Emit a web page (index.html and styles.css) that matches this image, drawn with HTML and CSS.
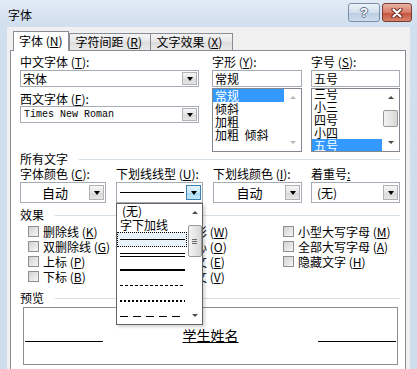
FILE: index.html
```html
<!DOCTYPE html>
<html lang="zh-CN">
<head>
    <meta charset="UTF-8">
    <title>字体</title>
    <link rel="stylesheet" href="styles.css">
</head>
<body>
    <div class="window">
        <div class="titlebar">
            <span class="title">字体</span>
            <div class="caption-btns">
                <span class="cap-btn help">?</span>
                <span class="cap-btn close">
                    <svg width="14" height="10" viewBox="0 0 14 10">
                        <path d="M3.5 1.5 L10.5 8.5 M10.5 1.5 L3.5 8.5" stroke="#6b2a22" stroke-width="4.2" stroke-linecap="round"/>
                        <path d="M3.5 1.5 L10.5 8.5 M10.5 1.5 L3.5 8.5" stroke="#fff" stroke-width="2.2" stroke-linecap="round"/>
                    </svg>
                </span>
            </div>
        </div>

        <div class="client">
            <div class="tabs">
                <span class="tab active">字体 (<u>N</u>)</span>
                <span class="tab">字符间距 (<u>R</u>)</span>
                <span class="tab">文字效果 (<u>X</u>)</span>
            </div>

            <div class="panel">
                <div class="font-row">
                    <div class="col">
                        <div class="lbl">中文字体 (<u>T</u>):</div>
                        <div class="field select-wide">
                            <span class="val">宋体</span>
                            <span class="drop-btn"><i class="tri-down"></i></span>
                        </div>
                        <div class="lbl lbl-gap">西文字体 (<u>F</u>):</div>
                        <div class="field select-wide flush">
                            <span class="val mono">Times New Roman</span>
                            <span class="drop-btn"><i class="tri-down"></i></span>
                        </div>
                    </div>
                    <div class="col">
                        <div class="lbl">字形 (<u>Y</u>):</div>
                        <div class="field list-w">常规</div>
                        <div class="listbox list-w">
                            <div class="items">
                                <div class="item sel">常规</div>
                                <div class="item">倾斜</div>
                                <div class="item">加粗</div>
                                <div class="item">加粗&nbsp;&nbsp;倾斜</div>
                            </div>
                            <div class="vscroll">
                                <span class="sbtn"><i class="tri-up off"></i></span>
                                <span class="sbtn"><i class="tri-down off"></i></span>
                            </div>
                        </div>
                    </div>
                    <div class="col">
                        <div class="lbl">字号 (<u>S</u>):</div>
                        <div class="field list-w2">五号</div>
                        <div class="listbox list-w2">
                            <div class="items scrolled">
                                <div class="item">三号</div>
                                <div class="item">小三</div>
                                <div class="item">四号</div>
                                <div class="item">小四</div>
                                <div class="item sel">五号</div>
                            </div>
                            <div class="vscroll">
                                <span class="sbtn"><i class="tri-up"></i></span>
                                <span class="thumb thumb-small"></span>
                                <span class="sbtn"><i class="tri-down"></i></span>
                            </div>
                        </div>
                    </div>
                </div>

                <div class="group">所有文字</div>
                <div class="color-row">
                    <div class="col">
                        <div class="lbl">字体颜色 (<u>C</u>):</div>
                        <div class="combo c1">
                            <span class="combo-val center">自动</span>
                            <span class="drop-btn"><i class="tri-down"></i></span>
                        </div>
                    </div>
                    <div class="col">
                        <div class="lbl">下划线线型 (<u>U</u>):</div>
                        <div class="combo c2">
                            <span class="combo-val"><span class="ln-single"></span></span>
                            <span class="drop-btn hot"><i class="tri-down"></i></span>
                        </div>
                    </div>
                    <div class="col">
                        <div class="lbl">下划线颜色 (<u>I</u>):</div>
                        <div class="combo c3">
                            <span class="combo-val center">自动</span>
                            <span class="drop-btn"><i class="tri-down"></i></span>
                        </div>
                    </div>
                    <div class="col">
                        <div class="lbl">着重号<u>:</u></div>
                        <div class="combo c4">
                            <span class="combo-val">(无)</span>
                            <span class="drop-btn"><i class="tri-down"></i></span>
                        </div>
                    </div>
                </div>

                <div class="group group-gap">效果</div>
                <div class="effects">
                    <label class="chk"><span class="box"></span><span>删除线 (<u>K</u>)</span></label>
                    <label class="chk"><span class="box"></span><span>阴影 (<u>W</u>)</span></label>
                    <label class="chk"><span class="box"></span><span>小型大写字母 (<u>M</u>)</span></label>
                    <label class="chk"><span class="box"></span><span>双删除线 (<u>G</u>)</span></label>
                    <label class="chk"><span class="box"></span><span>空心 (<u>O</u>)</span></label>
                    <label class="chk"><span class="box"></span><span>全部大写字母 (<u>A</u>)</span></label>
                    <label class="chk"><span class="box"></span><span>上标 (<u>P</u>)</span></label>
                    <label class="chk"><span class="box"></span><span>阳文 (<u>E</u>)</span></label>
                    <label class="chk"><span class="box"></span><span>隐藏文字 (<u>H</u>)</span></label>
                    <label class="chk"><span class="box"></span><span>下标 (<u>B</u>)</span></label>
                    <label class="chk"><span class="box"></span><span>阴文 (<u>V</u>)</span></label>
                </div>

                <div class="group preview-gap">预览</div>
                <div class="preview">
                    <span class="pv-line"></span>
                    <span class="pv-text">学生姓名</span>
                    <span class="pv-line"></span>
                </div>

                <!-- open list of the underline style combo -->
                <div class="dropdown">
                    <div class="dd-items">
                        <div class="dd-row text">(无)</div>
                        <div class="dd-row text">字下加线</div>
                        <div class="dd-row line focus"><span class="ln-single"></span></div>
                        <div class="dd-row line"><span class="ln-double"></span></div>
                        <div class="dd-row line"><span class="ln-thick"></span></div>
                        <div class="dd-row line"><span class="ln-dash"></span></div>
                        <div class="dd-row line"><span class="ln-dot"></span></div>
                        <div class="dd-row line"><span class="ln-long"></span></div>
                    </div>
                    <div class="vscroll dd-scroll">
                        <span class="sbtn"><i class="tri-up"></i></span>
                        <span class="thumb thumb-dd"><i class="grip"></i></span>
                        <span class="sbtn"><i class="tri-down"></i></span>
                    </div>
                </div>
            </div>
        </div>
    </div>
</body>
</html>
```

FILE: styles.css
```css
* {
    box-sizing: border-box;
}
body {
    margin: 0;
    font-family: "Noto Sans CJK SC", "Liberation Sans", sans-serif;
    font-size: 12px;
    color: #000;
    background: #fff;
}
u {
    text-decoration: underline;
}
.window {
    width: 417px;
    height: 369px;
    overflow: hidden;
    display: flex;
    flex-direction: column;
    background: linear-gradient(#e2eaf5, #d0deee 27px, #cfddee);
}

/* title bar */
.titlebar {
    height: 27px;
    flex-shrink: 0;
    display: flex;
    justify-content: space-between;
    padding: 0 5px 0 8px;
}
.title {
    line-height: 14px;
    margin-top: 8px;
}
.caption-btns {
    display: flex;
    gap: 2px;
    margin-top: 3px;
}
.cap-btn {
    height: 19px;
    border-radius: 3px;
    display: flex;
    align-items: center;
    justify-content: center;
}
.help {
    width: 32px;
    border: 1px solid #7b8ea8;
    background: linear-gradient(#eef3f9, #d3dfee 50%, #bccde3 51%, #cddcee);
    font-family: "Liberation Sans", sans-serif;
    font-weight: bold;
    font-size: 13px;
    color: #fff;
    text-shadow: 1px 0 #5d6f88, -1px 0 #5d6f88, 0 1px #5d6f88, 0 -1px #5d6f88;
}
.close {
    width: 30px;
    border: 1px solid #7a3b30;
    background: linear-gradient(#eab3a4, #d77d68 50%, #c4503b 51%, #d8856a);
}

/* client area and tabs */
.client {
    flex: 1;
    margin: 0 7px;
    background: #f0f0f0;
    padding: 4px 4px 0 3px;
}
.tabs {
    height: 20px;
    margin-bottom: -1px;
    padding-left: 3px;
    display: flex;
    align-items: flex-start;
}
.tab {
    height: 17px;
    margin-top: 2px;
    margin-left: -1px;
    padding: 0 6px;
    border: 1px solid #898c95;
    border-bottom: none;
    background: linear-gradient(#f4f4f4, #e6e6e6 50%, #dcdcdc 51%, #e9e9e9);
    line-height: 15px;
    white-space: nowrap;
}
.tab.active {
    height: 20px;
    margin-top: 0;
    margin-left: 0;
    margin-right: 1px;
    padding: 0 5px;
    line-height: 18px;
    background: #fff;
    position: relative;
    z-index: 1;
}
.tab:nth-child(2) {
    width: 82px;
}
.tab:nth-child(3) {
    width: 83px;
}
.panel {
    position: relative;
    height: 330px;
    background: #fff;
    border: 1px solid #898c95;
    padding: 4px 9px 0 9px;
}

/* generic bits */
.lbl {
    height: 14px;
    line-height: 14px;
    white-space: nowrap;
}
.lbl-gap {
    margin-top: 5px;
}
.field {
    height: 17px;
    margin-top: 1px;
    border: 1px solid #a5acb5;
    background: #fff;
    display: flex;
    align-items: center;
    padding-left: 2px;
    line-height: 14px;
}
.field.flush {
    margin-top: 0;
}
.val {
    flex: 1;
    white-space: nowrap;
}
.mono {
    font-family: "Liberation Mono", monospace;
    font-size: 10px;
    padding-left: 1px;
}
.select-wide {
    width: 179px;
}
.list-w {
    width: 90px;
}
.list-w2 {
    width: 89px;
}
.drop-btn {
    width: 15px;
    height: 13px;
    margin-right: 1px;
    border: 1px solid #b2b2b2;
    background: linear-gradient(#f6f6f6, #e4e4e4 50%, #d8d8d8 51%, #e6e6e6);
    display: flex;
    align-items: center;
    justify-content: center;
}
.drop-btn.hot {
    border-color: #3c7fb1;
    background: linear-gradient(#e5f4fc, #c6e7f8 50%, #a9daf3 51%, #c1e6f9);
}
.tri-down {
    width: 0;
    height: 0;
    border-left: 3.5px solid transparent;
    border-right: 3.5px solid transparent;
    border-top: 4px solid #000;
}
.tri-up {
    width: 0;
    height: 0;
    border-left: 3.5px solid transparent;
    border-right: 3.5px solid transparent;
    border-bottom: 4px solid #4a4a4a;
}
.vscroll .tri-down {
    border-left-width: 3px;
    border-right-width: 3px;
    border-top: 3px solid #4a4a4a;
}
.vscroll .tri-up {
    border-left-width: 3px;
    border-right-width: 3px;
    border-bottom-width: 3px;
}
.tri-up.off {
    border-bottom-color: #b8b8b8;
}
.tri-down.off {
    border-top-color: #b8b8b8;
}

/* font row */
.font-row {
    display: grid;
    grid-template-columns: 192px 99px 89px;
}
.listbox {
    height: 64px;
    margin-top: 1px;
    border: 1px solid #828790;
    background: #fff;
    display: flex;
    overflow: hidden;
}
.items {
    flex: 1;
    overflow: hidden;
}
.items.scrolled {
    margin-top: -2px;
}
.item {
    height: 13px;
    line-height: 13px;
    padding-left: 2px;
    white-space: nowrap;
}
.item.sel {
    background: #3399ff;
    color: #fff;
}
.vscroll {
    width: 17px;
    flex-shrink: 0;
    display: flex;
    flex-direction: column;
    align-items: center;
}
.sbtn {
    height: 17px;
    width: 15px;
    display: flex;
    align-items: center;
    justify-content: center;
}
.sbtn:last-child {
    margin-top: auto;
}
.thumb {
    width: 15px;
    border: 1px solid #9a9a9a;
    border-radius: 2px;
    background: linear-gradient(90deg, #f4f4f4, #e6e6e6 50%, #d6d6d6);
    display: flex;
    align-items: center;
    justify-content: center;
}
.thumb-small {
    height: 17px;
    margin-top: 4px;
}

/* group headers */
.group {
    width: 380px;
    height: 14px;
    line-height: 14px;
    display: flex;
    align-items: center;
    white-space: nowrap;
}
.group::after {
    content: "";
    flex: 1;
    margin-left: 11px;
    border-top: 1px solid #d5dfe5;
}
.group-gap {
    margin-top: 5px;
}
.preview-gap {
    margin-top: 7px;
}

/* colour / underline row */
.color-row {
    display: grid;
    grid-template-columns: 96px 97px 98px 89px;
    margin-top: 1px;
}
.combo {
    height: 21px;
    margin-top: 1px;
    border: 1px solid #a5acb5;
    background: #fff;
    display: flex;
    align-items: center;
}
.combo .drop-btn {
    height: 15px;
    margin-right: 1px;
}
.c1 {
    width: 86px;
}
.c2 {
    width: 87px;
}
.c3 {
    width: 89px;
}
.c4 {
    width: 89px;
}
.combo-val {
    flex: 1;
    padding-left: 5px;
    display: flex;
    align-items: center;
    white-space: nowrap;
}
.combo-val.center {
    justify-content: center;
    padding-left: 0;
    font-size: 13px;
}
.c2 .combo-val {
    padding: 0 2px 0 3px;
}

/* underline samples */
.ln-single,
.ln-double,
.ln-thick,
.ln-dash,
.ln-dot,
.ln-long {
    display: block;
    flex: 1;
}
.ln-single {
    height: 1px;
    background: #000;
}
.ln-double {
    height: 4px;
    border-top: 1px solid #000;
    border-bottom: 1px solid #000;
}
.ln-thick {
    height: 2px;
    background: #000;
}
.ln-dash {
    height: 1px;
    background: repeating-linear-gradient(90deg, #000 0 3px, transparent 3px 5px);
}
.ln-dot {
    height: 2px;
    background: repeating-linear-gradient(90deg, #000 0 2px, transparent 2px 4px);
}
.ln-long {
    height: 1px;
    background: repeating-linear-gradient(90deg, #000 0 8px, transparent 8px 13px);
}

/* effects */
.effects {
    display: grid;
    grid-template-columns: 140px 115px auto;
    grid-auto-rows: 15px;
    padding-left: 8px;
    margin-top: 2px;
}
.chk {
    display: flex;
    align-items: center;
    gap: 4px;
    white-space: nowrap;
    line-height: 14px;
}
.box {
    width: 11px;
    height: 11px;
    flex-shrink: 0;
    border: 1px solid #8e8f8f;
    background: linear-gradient(135deg, #d2d2d2, #f6f6f6);
}

/* preview */
.preview {
    width: 375px;
    height: 58px;
    margin: 2px 0 0 3px;
    border: 1px solid #8e8f8f;
    display: flex;
    justify-content: space-between;
    align-items: flex-start;
    padding: 0 1px;
}
.pv-line {
    width: 78px;
    height: 1px;
    margin-top: 33px;
    background: #000;
}
.pv-text {
    font-size: 14px;
    line-height: 16px;
    margin-top: 19px;
    text-decoration: underline;
}

/* open dropdown list */
.dropdown {
    position: absolute;
    left: 105px;
    top: 152px;
    width: 87px;
    height: 122px;
    border: 1px solid #646464;
    background: #fff;
    display: flex;
    box-shadow: 2px 2px 3px rgba(0, 0, 0, 0.18);
    z-index: 2;
}
.dd-items {
    flex: 1;
}
.dd-row {
    display: flex;
    align-items: center;
    padding: 0 2px 0 3px;
    white-space: nowrap;
}
.dd-row.text {
    height: 14px;
    line-height: 14px;
}
.dd-row.text:first-child {
    padding-left: 5px;
}
.dd-row.line {
    height: 15.33px;
}
.dd-row.focus {
    background: #e8f3fc;
    outline: 1px dotted #000;
    outline-offset: -1px;
}
.dd-scroll {
    width: 15px;
}
.dd-scroll .sbtn {
    width: 13px;
}
.thumb-dd {
    width: 14px;
    height: 32px;
    margin-top: 4px;
}
.grip {
    width: 5px;
    height: 5px;
    background: repeating-linear-gradient(#6a6a6a 0 1px, transparent 1px 2px);
}
```
